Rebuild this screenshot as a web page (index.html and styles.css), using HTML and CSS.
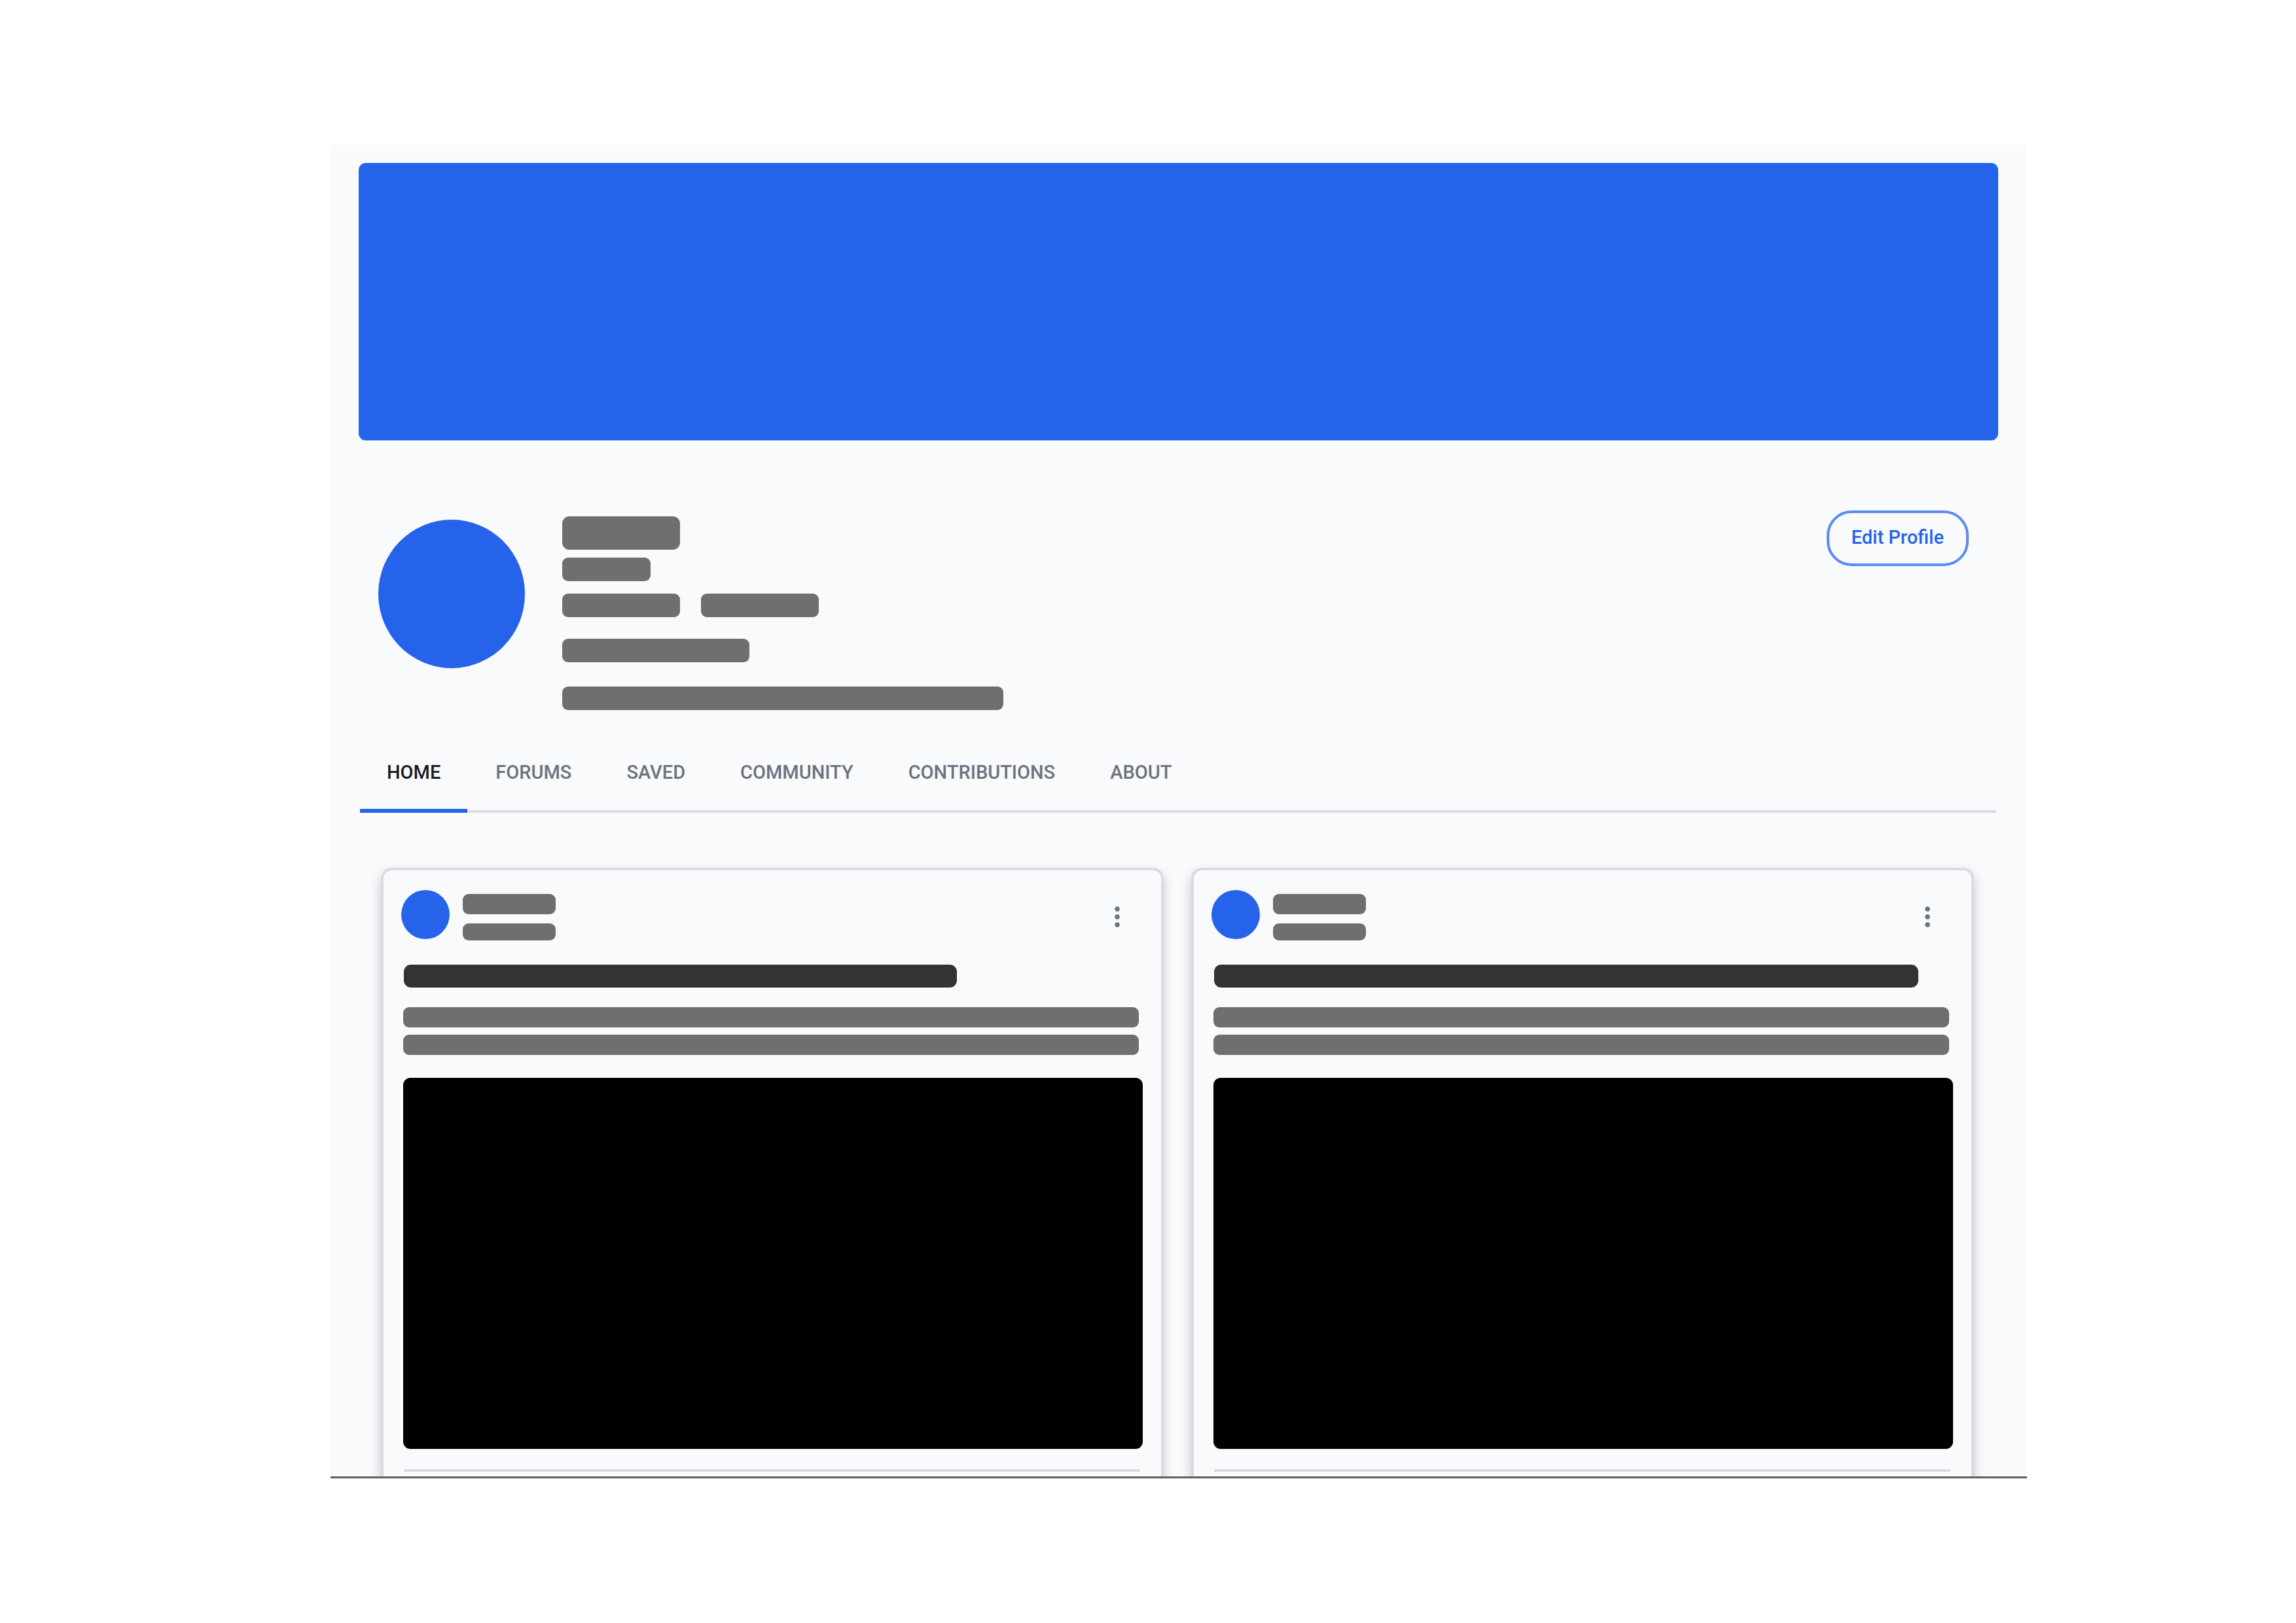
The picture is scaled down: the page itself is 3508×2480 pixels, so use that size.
FILE: index.html
```
<!DOCTYPE html>
<html lang="en">
<head>
<meta charset="utf-8">
<meta name="viewport" content="width=device-width, initial-scale=1">
<title>Profile</title>
<link rel="stylesheet" href="styles.css">
</head>
<body>
<main class="app">
  <div class="cover"></div>

  <section class="profile">
    <div class="profile-avatar"></div>
    <div class="profile-info">
      <div class="bar bar-name"></div>
      <div class="bar bar-handle"></div>
      <div class="bar-row">
        <div class="bar bar-stat"></div>
        <div class="bar bar-stat"></div>
      </div>
      <div class="bar bar-link"></div>
      <div class="bar bar-bio"></div>
    </div>
    <button class="edit-button" type="button">Edit Profile</button>
  </section>

  <nav class="tabs">
    <a class="tab tab-active" href="#home" aria-current="page">HOME</a>
    <a class="tab" href="#forums">FORUMS</a>
    <a class="tab" href="#saved">SAVED</a>
    <a class="tab" href="#community">COMMUNITY</a>
    <a class="tab" href="#contributions">CONTRIBUTIONS</a>
    <a class="tab" href="#about">ABOUT</a>
  </nav>

  <section class="cards">
    <article class="card">
      <header class="card-header">
        <div class="card-avatar"></div>
        <div class="card-author">
          <div class="bar bar-author"></div>
          <div class="bar bar-date"></div>
        </div>
        <button class="menu-button" type="button" aria-label="More options">
          <svg class="menu-icon" viewBox="0 0 16 36" aria-hidden="true"><circle cx="8" cy="6" r="3.7"/><circle cx="8" cy="18" r="3.7"/><circle cx="8" cy="30" r="3.7"/></svg>
        </button>
      </header>
      <div class="card-body">
        <div class="bar bar-title" style="width: 74.8%"></div>
        <div class="bar bar-text"></div>
        <div class="bar bar-text"></div>
        <div class="media"></div>
        <hr class="divider">
      </div>
    </article>
    <article class="card">
      <header class="card-header">
        <div class="card-avatar"></div>
        <div class="card-author">
          <div class="bar bar-author"></div>
          <div class="bar bar-date"></div>
        </div>
        <button class="menu-button" type="button" aria-label="More options">
          <svg class="menu-icon" viewBox="0 0 16 36" aria-hidden="true"><circle cx="8" cy="6" r="3.7"/><circle cx="8" cy="18" r="3.7"/><circle cx="8" cy="30" r="3.7"/></svg>
        </button>
      </header>
      <div class="card-body">
        <div class="bar bar-title" style="width: 95.2%"></div>
        <div class="bar bar-text"></div>
        <div class="bar bar-text"></div>
        <div class="media"></div>
        <hr class="divider">
      </div>
    </article>
  </section>
</main>
</body>
</html>
```
FILE: styles.css
```
* {
  box-sizing: border-box;
}

body {
  margin: 0;
  padding: 221px 411px 221px 505px;
  background: #ffffff;
  font-family: Roboto, "Liberation Sans", sans-serif;
}

.app {
  padding-top: 28px;
  background: #f8fafc;
  border-bottom: 3px solid #606062;
  overflow: hidden;
}

.cover {
  height: 424px;
  margin: 0 44px 0 43px;
  border-radius: 11px;
  background: #2563eb;
}

/* Profile summary */
.profile {
  display: flex;
  align-items: flex-start;
  padding: 107px 89px 0 73px;
}

.profile-avatar {
  flex: none;
  width: 224px;
  height: 227px;
  margin-top: 14px;
  border-radius: 50%;
  background: #2563eb;
}

.profile-info {
  flex: 1;
  margin: 9px 0 0 57px;
}

.bar {
  height: 36px;
  border-radius: 9px;
  background: #6f6f6f;
}

.bar-name {
  width: 180px;
  height: 51px;
  border-radius: 11px;
}

.bar-handle {
  width: 135px;
  margin-top: 12px;
}

.bar-row {
  display: flex;
  gap: 32px;
  margin-top: 19px;
}

.bar-stat {
  width: 180px;
}

.bar-link {
  width: 286px;
  margin-top: 33px;
}

.bar-bio {
  width: 674px;
  margin-top: 37px;
}

.edit-button {
  height: 85px;
  padding: 0 34px 3px;
  border: 4px solid #5b8af2;
  border-radius: 38px;
  background: transparent;
  color: #2563eb;
  font-family: inherit;
  font-size: 29px;
  font-weight: 500;
  cursor: pointer;
}

/* Tabs */
.tabs {
  display: flex;
  gap: 2px;
  margin: 58px 47px 0 45px;
  box-shadow: inset 0 -4px #dadee3;
}

.tab {
  padding: 20px 41px 39px;
  border-bottom: 6px solid transparent;
  color: #6b7280;
  font-size: 29px;
  font-weight: 500;
  line-height: 34px;
  text-decoration: none;
}

.tab-active {
  border-color: #2563eb;
  color: #1b1b1d;
}

/* Cards */
.cards {
  display: grid;
  grid-template-columns: 1fr 1fr;
  gap: 42px;
  margin: 84px 81px 0 77px;
}

.card {
  padding: 30px 28px 7px 27px;
  border: 4px solid #d9dbe2;
  border-bottom: 0;
  border-radius: 16px 16px 0 0;
  background: #f8fafc;
  box-shadow: 0 8px 18px rgba(0, 0, 0, 0.2);
}

.card-header {
  display: flex;
  align-items: flex-start;
}

.card-avatar {
  width: 74px;
  height: 75px;
  border-radius: 50%;
  background: #2563eb;
}

.card-author {
  flex: 1;
  margin: 6px 0 0 20px;
}

.bar-author {
  width: 142px;
  height: 31px;
}

.bar-date {
  width: 142px;
  height: 26px;
  margin-top: 14px;
}

.menu-button {
  display: flex;
  margin: 23px 31px 0 0;
  padding: 0;
  border: 0;
  background: none;
  cursor: pointer;
}

.menu-icon {
  width: 16px;
  height: 36px;
  fill: #6b7280;
}

.card-body {
  padding: 37px 0 0 3px;
}

.bar-title {
  height: 35px;
  margin: 0 0 30px 1px;
  border-radius: 11px;
  background: #333333;
}

.bar-text {
  height: 31px;
  margin: 0 6px 11px 0;
}

.media {
  height: 567px;
  margin-top: 35px;
  border-radius: 11px;
  background: #000000;
}

.divider {
  height: 4px;
  margin: 31px 4px 0 1px;
  border: 0;
  background: #dbdce3;
}
```
